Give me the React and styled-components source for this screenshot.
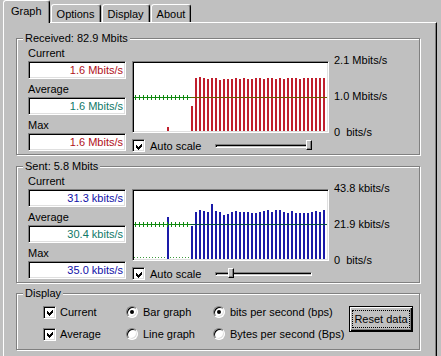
import styled, { createGlobalStyle } from "styled-components";

const GlobalStyle = createGlobalStyle`
  html, body {
    margin: 0;
    padding: 0;
    background: #c0c0c0;
  }
  body {
    font-family: "Liberation Sans", Arial, sans-serif;
    font-size: 11px;
    color: #000;
  }
`;

const receivedBars = [
  [33, 64],
  [57, 43],
  ...[15, 14, 15, 16, 15, 15, 17, 16, 16, 16, 15, 16, 15, 16, 16, 15, 15, 16, 15, 15, 16, 15, 16, 15, 15, 15, 16, 15, 15, 15, 15, 15, 15].map(
    (top, i) => [61 + i * 4, top]
  ),
];

const sentBars = [
  [33, 26],
  [57, 35],
  ...[21, 19, 20, 21, 13, 20, 21, 24, 23, 21, 20, 21, 21, 21, 22, 22, 21, 20, 19, 21, 19, 19, 21, 22, 20, 22, 22, 22, 22, 21, 20, 21, 19].map(
    (top, i) => [61 + i * 4, top]
  ),
];

const groups = [
  {
    title: "Received: 82.9 Mbits",
    color: "#b01020",
    values: ["1.6 Mbits/s", "1.6 Mbits/s", "1.6 Mbits/s"],
    scale: ["2.1 Mbits/s", "1.0 Mbits/s", "0  bits/s"],
    bars: receivedBars,
    barColor: "#c0202e",
    lineColor: "#6a5a00",
    avgY: 34,
    thumb: 93,
    dots: false,
  },
  {
    title: "Sent: 5.8 Mbits",
    color: "#1010a8",
    values: ["31.3 kbits/s", "30.4 kbits/s", "35.0 kbits/s"],
    scale: ["43.8 kbits/s", "21.9 kbits/s", "0  bits/s"],
    bars: sentBars,
    barColor: "#1a1aa8",
    lineColor: "#0a5040",
    avgY: 33,
    thumb: 15,
    dots: true,
  },
];

function Chart({ bars, barColor, lineColor, avgY, dots }) {
  const ticks = [];
  for (let x = 1; x < 56; x += 4) ticks.push(x);
  return (
    <svg width="193" height="68" viewBox="0 0 193 68" shapeRendering="crispEdges">
      {dots && (
        <line x1="0" y1="66.5" x2="57" y2="66.5" stroke="#3c9a3c" strokeDasharray="1 2" />
      )}
      {bars.map(([x, top]) => (
        <rect key={x} x={x} y={top} width="2" height={68 - top} fill={barColor} />
      ))}
      <line x1="0" y1={avgY + 0.5} x2="57" y2={avgY + 0.5} stroke="#108a10" />
      <line x1="57" y1={avgY + 0.5} x2="193" y2={avgY + 0.5} stroke={lineColor} />
      {ticks.map((x) => (
        <line key={x} x1={x + 0.5} y1={avgY - 2} x2={x + 0.5} y2={avgY + 3} stroke="#108a10" />
      ))}
    </svg>
  );
}

function CheckMark() {
  return (
    <svg width="9" height="9" viewBox="0 0 9 9" shapeRendering="crispEdges">
      <polygon points="1,3 3,5 7,1 7,4 3,8 1,6" fill="#000" />
    </svg>
  );
}

export default function App() {
  return (
    <>
      <GlobalStyle />
      <Window>
        <TabBar>
          <Tab $active>Graph</Tab>
          <Tab>Options</Tab>
          <Tab>Display</Tab>
          <Tab>About</Tab>
        </TabBar>
        <Panel>
          {groups.map((g) => (
            <Group key={g.title} $gap={g.dots ? 3 : 0}>
              <Legend>{g.title}</Legend>
              <StatsRow>
                <Fields>
                  {["Current", "Average", "Max"].map((label, i) => (
                    <Field key={label}>
                      <FieldLabel>{label}</FieldLabel>
                      <ValueBox $color={i === 1 ? "#107868" : g.color}>{g.values[i]}</ValueBox>
                    </Field>
                  ))}
                </Fields>
                <GraphColumn>
                  <GraphBox>
                    <Chart {...g} />
                  </GraphBox>
                  <AutoRow>
                    <CheckBox>
                      <CheckMark />
                    </CheckBox>
                    Auto scale
                    <Track>
                      <Thumb $left={g.thumb} />
                    </Track>
                  </AutoRow>
                </GraphColumn>
                <Scale>
                  {g.scale.map((s) => (
                    <span key={s}>{s}</span>
                  ))}
                </Scale>
              </StatsRow>
            </Group>
          ))}
          <Group $gap={3}>
            <Legend>Display</Legend>
            <DisplayGrid>
              <Option>
                <CheckBox>
                  <CheckMark />
                </CheckBox>
                Current
              </Option>
              <Option>
                <Radio $on />
                Bar graph
              </Option>
              <Option>
                <Radio $on />
                bits per second (bps)
              </Option>
              <ResetButton>
                <Focus>Reset data</Focus>
              </ResetButton>
              <Option>
                <CheckBox>
                  <CheckMark />
                </CheckBox>
                Average
              </Option>
              <Option>
                <Radio />
                Line graph
              </Option>
              <Option>
                <Radio />
                Bytes per second (Bps)
              </Option>
            </DisplayGrid>
          </Group>
        </Panel>
      </Window>
    </>
  );
}

const Window = styled.div`
  width: 441px;
  height: 356px;
  overflow: hidden;
  box-sizing: border-box;
  padding-left: 3px;
  display: flex;
  flex-direction: column;
`;

const TabBar = styled.div`
  display: flex;
  align-items: flex-end;
  height: 22px;
  flex-shrink: 0;
`;

const Tab = styled.div`
  position: relative;
  z-index: ${(p) => (p.$active ? 1 : 0)};
  box-sizing: border-box;
  height: ${(p) => (p.$active ? "23px" : "18px")};
  margin-bottom: ${(p) => (p.$active ? "-1px" : "0")};
  margin-left: ${(p) => (p.$active ? "0" : "1px")};
  padding: ${(p) => (p.$active ? "0 7px 2px" : "0 5px")};
  display: flex;
  align-items: center;
  background: #c0c0c0;
  border-top: 1px solid #fff;
  border-left: 1px solid #fff;
  border-right: 1px solid #000;
  border-radius: 3px 3px 0 0;
  box-shadow: inset -1px 0 #808080;
`;

const Panel = styled.div`
  flex: 1;
  width: 434px;
  box-sizing: border-box;
  border-top: 1px solid #fff;
  border-left: 1px solid #fff;
  border-right: 1px solid #000;
  box-shadow: inset -1px 0 #808080;
  padding: 8px 14px 0 12px;
`;

const Group = styled.fieldset`
  width: 404px;
  box-sizing: border-box;
  margin: 0 0 ${(p) => (p.$gap ? "3px" : "4px")};
  padding: 1px 0 2px 11px;
  border: 1px solid #808080;
  box-shadow: inset 1px 1px #fff, 1px 1px #fff;
  min-inline-size: 0;
`;

const Legend = styled.legend`
  padding: 0 2px;
  margin-left: -5px;
  line-height: 14px;
  background: #c0c0c0;
`;

const StatsRow = styled.div`
  display: flex;
  align-items: flex-start;
`;

const Fields = styled.div`
  width: 98px;
  display: flex;
  flex-direction: column;
  gap: 3px;
`;

const Field = styled.div`
  display: flex;
  flex-direction: column;
`;

const FieldLabel = styled.span`
  line-height: 15px;
`;

const ValueBox = styled.div`
  height: 18px;
  box-sizing: border-box;
  background: #fff;
  border: 1px solid;
  border-color: #808080 #fff #fff #808080;
  box-shadow: inset 1px 1px #000, inset -1px -1px #dfdfdf;
  color: ${(p) => p.$color};
  text-align: right;
  line-height: 16px;
  padding-right: 2px;
`;

const GraphColumn = styled.div`
  margin-left: 6px;
  margin-top: 15px;
  width: 197px;
  display: flex;
  flex-direction: column;
`;

const GraphBox = styled.div`
  height: 72px;
  box-sizing: border-box;
  background: #fff;
  border: 1px solid;
  border-color: #808080 #fff #fff #808080;
  box-shadow: inset 1px 1px #000, inset -1px -1px #dfdfdf;
  padding: 1px;
  svg {
    display: block;
  }
`;

const AutoRow = styled.div`
  margin-top: 6px;
  height: 13px;
  display: flex;
  align-items: center;
  gap: 5px;
`;

const CheckBox = styled.span`
  width: 13px;
  height: 13px;
  box-sizing: border-box;
  flex-shrink: 0;
  background: #fff;
  border: 1px solid;
  border-color: #808080 #fff #fff #808080;
  box-shadow: inset 1px 1px #000, inset -1px -1px #dfdfdf;
  display: flex;
  align-items: center;
  justify-content: center;
  padding: 1px 0 0 1px;
`;

const Track = styled.div`
  position: relative;
  margin-left: auto;
  margin-right: 17px;
  width: 97px;
  height: 4px;
  box-sizing: border-box;
  border: 1px solid;
  border-color: #808080 #fff #fff #808080;
  box-shadow: inset 1px 1px #000;
`;

const Thumb = styled.span`
  position: absolute;
  left: ${(p) => p.$left - 3}px;
  top: -5px;
  width: 6px;
  height: 10px;
  box-sizing: border-box;
  background: #c0c0c0;
  border: 1px solid;
  border-color: #fff #000 #000 #fff;
  box-shadow: inset -1px -1px #808080;
`;

const Scale = styled.div`
  margin-left: 5px;
  margin-top: 7px;
  height: 86px;
  display: flex;
  flex-direction: column;
  justify-content: space-between;
  line-height: 14px;
  white-space: pre;
`;

const DisplayGrid = styled.div`
  display: grid;
  grid-template-columns: 83px 87px 136px 64px;
  grid-template-rows: 22px 22px;
  padding: 0 0 2px 15px;
`;

const Option = styled.label`
  display: flex;
  align-items: center;
  gap: 4px;
`;

const Radio = styled.span`
  position: relative;
  width: 12px;
  height: 12px;
  box-sizing: border-box;
  margin-right: 1px;
  border-radius: 50%;
  background: #fff;
  border: 1px solid;
  border-color: #808080 #fff #fff #808080;
  box-shadow: inset 1px 1px #000, inset -1px -1px #dfdfdf;
  &::after {
    content: "";
    display: ${(p) => (p.$on ? "block" : "none")};
    position: absolute;
    left: 3px;
    top: 3px;
    width: 4px;
    height: 4px;
    border-radius: 50%;
    background: #000;
  }
`;

const ResetButton = styled.button`
  grid-column: 4;
  grid-row: 1 / span 2;
  align-self: start;
  margin-top: 5px;
  width: 64px;
  height: 26px;
  padding: 3px 2px;
  box-sizing: border-box;
  background: #c0c0c0;
  border: 1px solid #000;
  box-shadow: inset 1px 1px #fff, inset -1px -1px #000, inset -2px -2px #808080;
  font: inherit;
  color: #000;
  display: flex;
`;

const Focus = styled.span`
  flex: 1;
  border: 1px dotted #000;
  display: flex;
  align-items: center;
  justify-content: center;
  white-space: nowrap;
`;
